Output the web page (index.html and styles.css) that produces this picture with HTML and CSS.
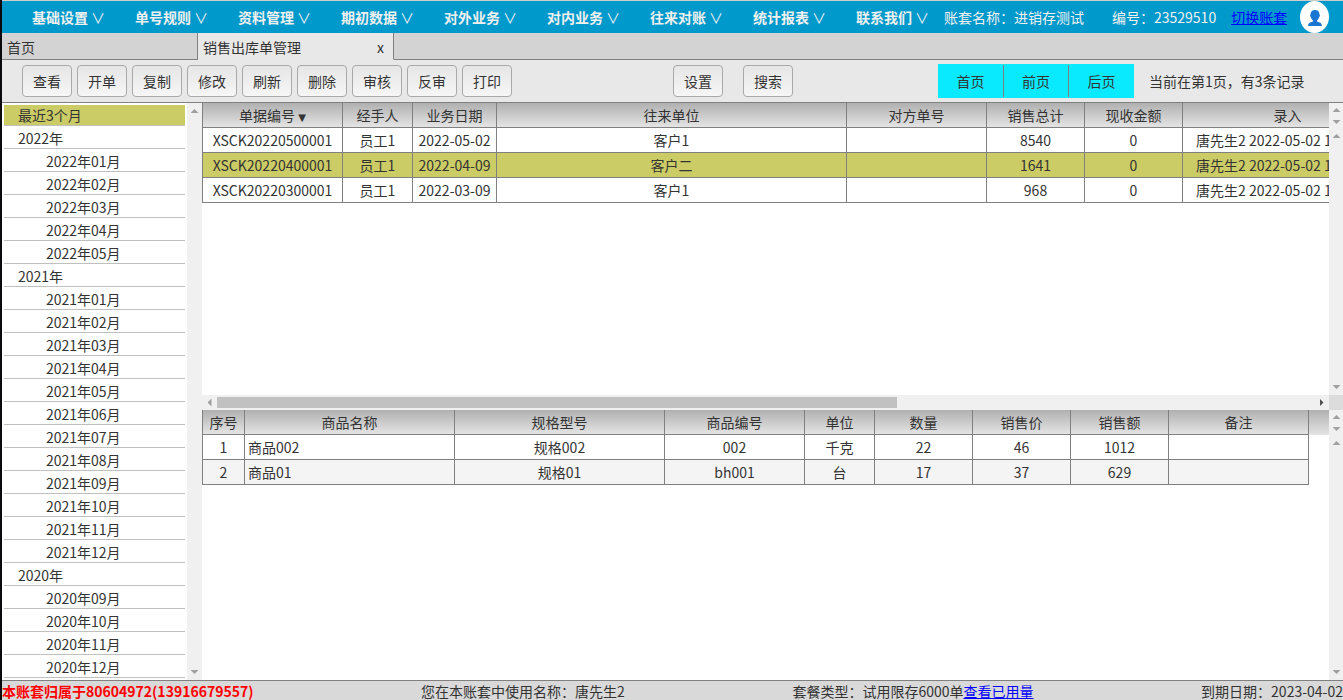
FILE: index.html
```html
<!DOCTYPE html>
<html lang="zh-CN">
<head>
<meta charset="utf-8">
<title>销售出库单管理</title>
<link rel="stylesheet" href="styles.css">
</head>
<body>
<div class="app">
  <header class="topbar">
    <nav class="menu" id="menu"></nav>
    <div class="account">
      <span class="account-name">账套名称：进销存测试</span>
      <span class="account-id">编号：23529510</span>
      <a class="account-switch" href="#">切换账套</a>
      <button class="avatar" type="button" aria-label="用户">
        <svg width="14" height="16" viewBox="0 0 14 16"><path fill="#1976d2" d="M7 0C4 0 2.500 1.800 2.500 4.500c-.6.200-.6 2.300.4 2.500.3 1.400 1 2.600 2 3.300v1.200C4 12.300.2 12 0 16h14c-.2-4-4-3.700-4.900-4.500v-1.200c1-.7 1.700-1.900 2-3.300 1-.2 1-2.300.4-2.500C11.500 1.800 10 0 7 0z"/></svg>
      </button>
    </div>
  </header>

  <div class="tabs">
    <button class="tab" type="button">首页</button>
    <div class="tab tab-active"><span>销售出库单管理</span><button class="tab-close" type="button">x</button></div>
    <div class="tabs-rest"></div>
  </div>

  <div class="toolbar">
    <div class="group actions">
      <button class="btn" type="button">查看</button>
      <button class="btn" type="button">开单</button>
      <button class="btn" type="button">复制</button>
      <button class="btn" type="button">修改</button>
      <button class="btn" type="button">刷新</button>
      <button class="btn" type="button">删除</button>
      <button class="btn" type="button">审核</button>
      <button class="btn" type="button">反审</button>
      <button class="btn" type="button">打印</button>
    </div>
    <div class="group tools">
      <button class="btn" type="button">设置</button>
      <button class="btn" type="button">搜索</button>
    </div>
    <div class="group paging">
      <div class="pager">
        <button type="button">首页</button>
        <button type="button">前页</button>
        <button type="button">后页</button>
      </div>
      <span>当前在第1页，有3条记录</span>
    </div>
  </div>

  <main class="content">
    <aside class="sidebar">
      <ul class="periods" id="periods"></ul>
      <div class="vscroll"><i class="arrow up"></i><i class="arrow down"></i></div>
    </aside>

    <section class="panes">
      <div class="pane master">
        <div class="grid-area">
          <table class="grid">
            <colgroup><col class="w140"><col class="w70"><col class="w84"><col class="w350"><col class="w140"><col class="w98"><col class="w98"><col class="w210"></colgroup>
            <thead><tr><th>单据编号 <span class="sort">▼</span></th><th>经手人</th><th>业务日期</th><th>往来单位</th><th>对方单号</th><th>销售总计</th><th>现收金额</th><th>录入</th></tr></thead>
            <tbody>
              <tr><td>XSCK20220500001</td><td>员工1</td><td>2022-05-02</td><td>客户1</td><td></td><td>8540</td><td>0</td><td class="entry">唐先生2 2022-05-02 1</td></tr>
              <tr class="selected"><td>XSCK20220400001</td><td>员工1</td><td>2022-04-09</td><td>客户二</td><td></td><td>1641</td><td>0</td><td class="entry">唐先生2 2022-05-02 1</td></tr>
              <tr><td>XSCK20220300001</td><td>员工1</td><td>2022-03-09</td><td>客户1</td><td></td><td>968</td><td>0</td><td class="entry">唐先生2 2022-05-02 1</td></tr>
            </tbody>
          </table>
        </div>
        <div class="scroll-column">
          <div class="vscroll head"><i class="arrow up"></i><i class="arrow down"></i></div>
          <div class="vscroll"><i class="arrow up"></i><i class="arrow down"></i></div>
        </div>
      </div>
      <div class="hscroll">
        <span class="hscroll-end"><i class="arrow left"></i></span>
        <div class="track"><div class="thumb"></div></div>
        <span class="hscroll-end"><i class="arrow right"></i></span>
        <div class="corner"></div>
      </div>
      <div class="pane detail">
        <div class="grid-area shaded-head">
          <table class="grid">
            <colgroup><col class="w42"><col class="w210"><col class="w210"><col class="w140"><col class="w70"><col class="w98"><col class="w98"><col class="w98"><col class="w140"></colgroup>
            <thead><tr><th>序号</th><th>商品名称</th><th>规格型号</th><th>商品编号</th><th>单位</th><th>数量</th><th>销售价</th><th>销售额</th><th>备注</th></tr></thead>
            <tbody>
              <tr><td>1</td><td class="name">商品002</td><td>规格002</td><td>002</td><td>千克</td><td>22</td><td>46</td><td>1012</td><td></td></tr>
              <tr class="even"><td>2</td><td class="name">商品01</td><td>规格01</td><td>bh001</td><td>台</td><td>17</td><td>37</td><td>629</td><td></td></tr>
            </tbody>
          </table>
        </div>
        <div class="scroll-column">
          <div class="vscroll head"><i class="arrow up"></i><i class="arrow down"></i></div>
          <div class="vscroll"><i class="arrow up"></i><i class="arrow down"></i></div>
        </div>
      </div>
    </section>
  </main>

  <footer class="status">
    <strong>本账套归属于80604972(13916679557)</strong>
    <span>您在本账套中使用名称：唐先生2</span>
    <span>套餐类型：试用限存6000单<a href="#">查看已用量</a></span>
    <span>到期日期：2023-04-02</span>
  </footer>
</div>
<script src="app.js"></script>
</body>
</html>
```
FILE: styles.css
```css
* { box-sizing: border-box; }

body, button {
  font-family: "Noto Sans CJK SC", sans-serif;
  font-size: 14px;
  line-height: 20px;
  color: #333;
}

body { margin: 0; background: #fff; }

button {
  border: 0;
  padding: 0;
  margin: 0;
  background: none;
  cursor: pointer;
}

a { color: #00f; }

.app {
  display: flex;
  flex-direction: column;
  height: 100vh;
  overflow: hidden;
  border-left: 2px solid #0a0a0c;
}

/* Top navigation */
.topbar {
  display: flex;
  flex: none;
  height: 33px;
  border-top: 1px solid #ccc;
  background: #0099cc;
  color: #f0f0f0;
  white-space: nowrap;
}

.menu { display: flex; padding-left: 15px; }

.menu button {
  width: 103px;
  color: #f0f0f0;
  font-weight: bold;
}

.menu span { font-weight: normal; }

.account {
  display: flex;
  flex: 1;
  align-items: center;
}

.account-name { margin-right: 28px; }
.account-id { margin-right: 15px; }

.avatar {
  display: flex;
  align-items: center;
  justify-content: center;
  width: 29px;
  height: 32px;
  margin: 0 14px 0 auto;
  padding-top: 2px;
  border-radius: 50%;
  background: #fff;
}

/* Tabs */
.tabs { display: flex; flex: none; height: 27px; background: #d3d3d3; }

.tab {
  display: flex;
  align-items: center;
  justify-content: space-between;
  width: 196px;
  padding: 2px 5px 0;
  border-right: 1px solid #808080;
  border-bottom: 1px solid #808080;
}

.tab-active {
  padding-right: 9px;
  border-bottom-color: #e8e8e8;
  background: #e8e8e8;
}

.tabs-rest { flex: 1; border-bottom: 1px solid #808080; }

/* Toolbar */
.toolbar {
  display: flex;
  flex: none;
  align-items: center;
  height: 43px;
  padding-left: 20px;
  border-bottom: 1px solid #808080;
  background: #e8e8e8;
  white-space: nowrap;
}

.group { display: flex; align-items: center; }
.actions { gap: 5px; }
.tools { gap: 20px; margin-left: 161px; }
.paging { gap: 15px; margin-left: 145px; }

.btn {
  width: 50px;
  height: 32px;
  border: 1px solid #a9a9a9;
  border-radius: 4px;
  background: linear-gradient(#e6e6e6, #f6f6f6);
}

.pager { display: flex; padding: 1px 0; background: #0aeaff; }

.pager button { width: 65px; height: 32px; border-left: 1px solid #808080; }
.pager button:first-child { border-left: 0; }
.pager button:last-child { width: 66px; }

/* Content */
.content { display: flex; flex: 1; min-height: 0; }

.sidebar { display: flex; flex: none; width: 200px; }

.periods {
  flex: 1;
  margin: 0;
  padding: 0 2px;
  overflow: hidden;
  list-style: none;
}

.periods li {
  height: 21px;
  margin-top: 2px;
  padding-left: 14px;
  border-bottom: 1px solid #c0c0c0;
}

.periods .month { padding-left: 42px; }
.periods .current { background: #cccc66; }

.panes { display: flex; flex: 1; flex-direction: column; min-width: 0; }

.pane { display: flex; min-height: 0; }
.master { flex: 292 1 0; }
.detail { flex: 270 1 0; }

.grid-area { flex: 1; min-width: 0; overflow: hidden; }

.shaded-head {
  background: linear-gradient(#b0b0b0, #e4e4e4) 0 0 / 100% 25px no-repeat;
}

.grid {
  width: 1px;
  table-layout: fixed;
  border-spacing: 0;
  border-left: 1px solid #808080;
  white-space: nowrap;
}

.grid th, .grid td {
  height: 25px;
  padding: 2px 0;
  border-right: 1px solid #808080;
  border-bottom: 1px solid #808080;
  font-weight: normal;
  text-align: center;
}

.grid th { background: linear-gradient(#b0b0b0, #e4e4e4); }
.grid td { background: #fff; }
.grid .selected td { background: #cccc66; }
.grid .even td { background: #f4f4f4; }
.grid .name { padding-left: 3px; text-align: left; }
.grid .entry { padding-left: 13px; text-align: left; }

.sort { font-family: "DejaVu Sans", sans-serif; font-size: 10px; line-height: 10px; }

.w42 { width: 42px; }
.w70 { width: 70px; }
.w84 { width: 84px; }
.w98 { width: 98px; }
.w140 { width: 140px; }
.w210 { width: 210px; }
.w350 { width: 350px; }

/* Scroll bars */
.vscroll {
  display: flex;
  flex: 1;
  flex-direction: column;
  align-items: center;
  justify-content: space-between;
  width: 15px;
  padding: 6px 0;
  background: #f0f0f0;
}

.sidebar .vscroll { flex: none; }

.scroll-column { display: flex; flex: none; flex-direction: column; width: 14px; }
.scroll-column .head { flex: none; height: 25px; padding: 5px 0 4px; }

.arrow { width: 8px; height: 4px; background: #a0a0a0; }
.up { clip-path: polygon(50% 0, 100% 100%, 0 100%); }
.down { clip-path: polygon(0 0, 100% 0, 50% 100%); }
.left { width: 4px; height: 8px; clip-path: polygon(100% 0, 100% 100%, 0 50%); }
.right { width: 4px; height: 8px; background: #505050; clip-path: polygon(0 0, 100% 50%, 0 100%); }

.hscroll { display: flex; flex: none; height: 15px; background: #f0f0f0; }

.hscroll-end {
  display: flex;
  align-items: center;
  justify-content: center;
  width: 15px;
}

.track { flex: 1; padding: 2px 0; }
.thumb { width: 62%; height: 11px; background: #c1c1c1; }
.corner { width: 14px; background: #dcdcdc; }

/* Status bar */
.status {
  display: flex;
  flex: none;
  justify-content: space-between;
  height: 20px;
  border-top: 1px solid #808080;
  background: #d9d9d9;
  white-space: nowrap;
}

.status strong { color: #f00; }
```
FILE: app.js
```js
const menus = ['基础设置', '单号规则', '资料管理', '期初数据', '对外业务', '对内业务', '往来对账', '统计报表', '联系我们'];
document.getElementById('menu').innerHTML = menus
  .map((name) => `<button type="button">${name} <span>∨</span></button>`)
  .join('');

const years = [
  [2022, ['01', '02', '03', '04', '05']],
  [2021, ['01', '02', '03', '04', '05', '06', '07', '08', '09', '10', '11', '12']],
  [2020, ['09', '10', '11', '12']],
];
document.getElementById('periods').innerHTML = '<li class="current">最近3个月</li>' + years
  .map(([year, months]) => `<li>${year}年</li>` + months.map((m) => `<li class="month">${year}年${m}月</li>`).join(''))
  .join('');
```
